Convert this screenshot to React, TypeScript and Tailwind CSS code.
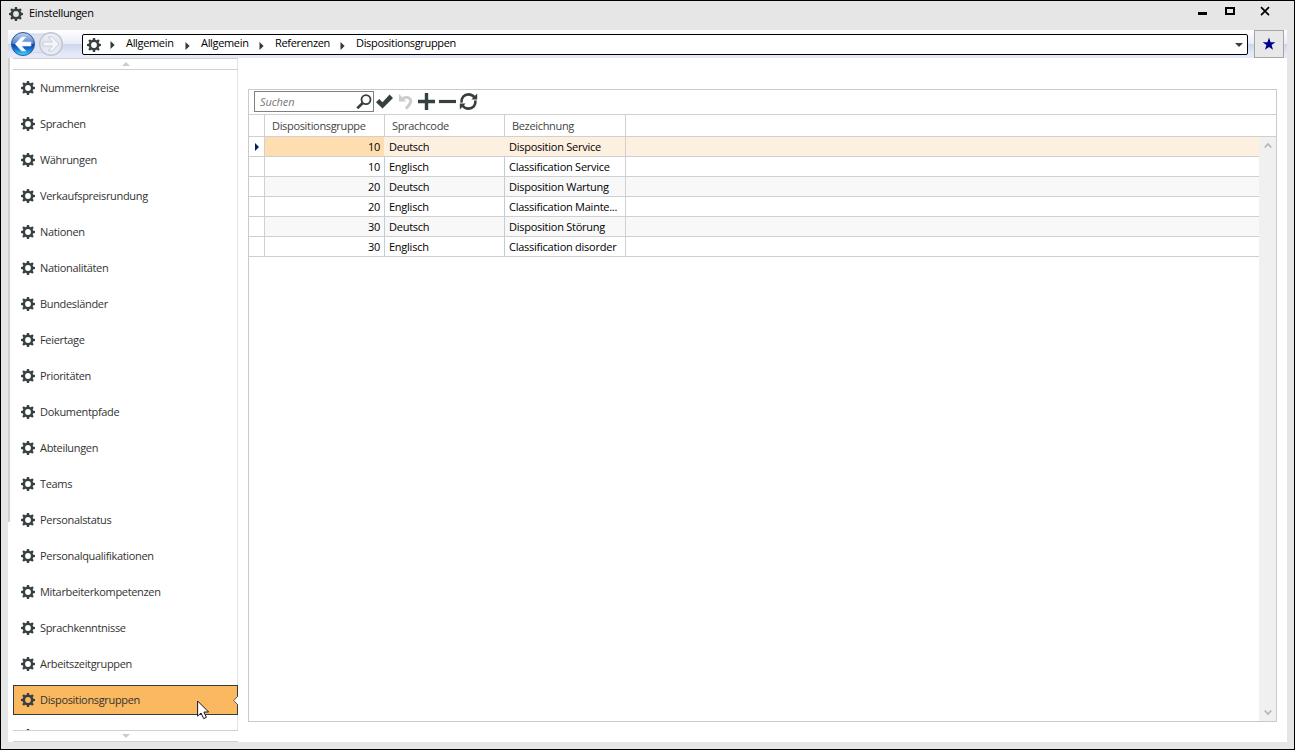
import clsx from "clsx";

const navItems = [
  "Nummernkreise",
  "Sprachen",
  "Währungen",
  "Verkaufspreisrundung",
  "Nationen",
  "Nationalitäten",
  "Bundesländer",
  "Feiertage",
  "Prioritäten",
  "Dokumentpfade",
  "Abteilungen",
  "Teams",
  "Personalstatus",
  "Personalqualifikationen",
  "Mitarbeiterkompetenzen",
  "Sprachkenntnisse",
  "Arbeitszeitgruppen",
  "Dispositionsgruppen",
  "",
];

const crumbs = [
  { label: "Allgemein", width: "w-[75px]" },
  { label: "Allgemein", width: "w-[74px]" },
  { label: "Referenzen", width: "w-[81px]" },
  { label: "Dispositionsgruppen", width: "w-[120px]" },
];

const rows = [
  { group: 10, language: "Deutsch", name: "Disposition Service" },
  { group: 10, language: "Englisch", name: "Classification Service" },
  { group: 20, language: "Deutsch", name: "Disposition Wartung" },
  { group: 20, language: "Englisch", name: "Classification Mainte..." },
  { group: 30, language: "Deutsch", name: "Disposition Störung" },
  { group: 30, language: "Englisch", name: "Classification disorder" },
];

const GearIcon = () => (
  <svg className="h-[14px] w-[14px] shrink-0" viewBox="-7 -7 14 14">
    <circle r="4.15" fill="none" stroke="#374040" strokeWidth="2.5" />
    {[0, 45, 90, 135, 180, 225, 270, 315].map((angle) => (
      <path
        key={angle}
        d="M-1.4 -4.6L-1.1 -7H1.1L1.4 -4.6Z"
        fill="#374040"
        transform={`rotate(${angle})`}
      />
    ))}
  </svg>
);

const TitleBar = () => (
  <header className="flex h-[29px] shrink-0 items-start bg-[#e6e6e6] pl-2">
    <div className="mt-[6px]">
      <GearIcon />
    </div>
    <span className="mt-[4px] ml-[6px] leading-4 text-black">Einstellungen</span>
    <svg className="mt-[4px] mr-[22px] ml-auto h-4 w-[76px]" viewBox="0 0 76 16" fill="none" stroke="#000">
      <path d="M2 8.5H11" strokeWidth="3" />
      <path d="M30 3H38V9H30Z" strokeWidth="2" />
      <path d="M65 2.2L73 10.2M73 2.2L65 10.2" strokeWidth="1.7" />
    </svg>
  </header>
);

const NavButtons = () => (
  <svg className="h-7 w-[60px] shrink-0" viewBox="0 0 60 28">
    <defs>
      <linearGradient id="back" x1="0" y1="0" x2="0" y2="1">
        <stop offset="0" stopColor="#c3d2ee" />
        <stop offset=".48" stopColor="#5583cc" />
        <stop offset=".5" stopColor="#0d3f9c" />
        <stop offset=".72" stopColor="#1272d4" />
        <stop offset="1" stopColor="#4de0ff" />
      </linearGradient>
      <linearGradient id="next" x1="0" y1="0" x2="0" y2="1">
        <stop offset="0" stopColor="#edf0f8" />
        <stop offset=".5" stopColor="#dfe3ed" />
        <stop offset="1" stopColor="#eceff9" />
      </linearGradient>
    </defs>
    <path d="M14 2.5Q29 6 44 2.5V25Q29 20 14 25Z" fill="#dbe2f3" stroke="#cdd6ea" />
    <circle cx="15" cy="14" r="11.5" fill="url(#back)" stroke="#2f5597" />
    <circle cx="43" cy="14" r="11.3" fill="url(#next)" stroke="#c2c6d0" strokeWidth="1.4" />
    <path
      d="M7.2 14L13.6 7H17.8L13.6 12H23V16H13.6L17.8 21H13.6Z"
      fill="#fff"
      stroke="#e6edf8"
      strokeWidth=".6"
    />
    <path
      d="M50.8 14L44.4 7H40.2L44.4 12H35V16H44.4L40.2 21H44.4Z"
      fill="#f5f6fb"
      stroke="#c3c8d3"
      strokeWidth=".8"
    />
  </svg>
);

const AddressBar = () => (
  <div className="flex h-7 shrink-0 bg-[linear-gradient(to_bottom,#fff_0%,#e9edf7_49%,#cbd5ec_50%,#e6e9fa_85%,#e6e9fa_100%)]">
    <NavButtons />
    <div className="mt-[4px] ml-[14px] flex h-[21px] w-[1166px] items-center rounded-[2px] border border-black bg-white pr-1 pl-[4px] text-black">
      <GearIcon />
      <div className="ml-[9px] flex h-4">
        {crumbs.map(({ label, width }, i) => (
          <div key={i} className={clsx("flex items-start whitespace-nowrap", width)}>
            <svg
              className={clsx("mr-[11px] h-[8px] w-[5px] shrink-0", i === 0 ? "mt-[4px]" : "mt-[5px]")}
              viewBox="0 0 5 8"
            >
              <path d="M.5 0L4.6 4L.5 8Z" fill="#2f3838" />
            </svg>
            <span className="-mt-[2px] leading-4">{label}</span>
          </div>
        ))}
      </div>
      <svg className="ml-auto h-[4px] w-[8px]" viewBox="0 0 8 4">
        <path d="M0 0H8L4 4Z" fill="#374040" />
      </svg>
    </div>
    <button className="ml-[6px] flex h-7 w-[30px] items-center justify-center border border-[#a5a5a5] bg-[#e8e8e8]">
      <svg className="h-[14px] w-[14px]" viewBox="0 0 14 14">
        <path d="M7 .5L8.6 5.2H13.4L9.6 8.1L11 12.8L7 10L3 12.8L4.4 8.1L.6 5.2H5.4Z" fill="#00008b" />
      </svg>
    </button>
  </div>
);

const Sidebar = () => (
  <aside className="flex w-[230px] shrink-0">
    <div className="h-[464px] w-[2px] bg-[#d0d0d0]" />
    <div className="relative ml-[3px] flex w-[225px] flex-col border-r border-[#e3e3e3]">
      <div className="flex h-[12px] w-[225px] shrink-0 items-center justify-center border-y border-[#d0d0d0]">
        <svg className="h-[4px] w-[8px]" viewBox="0 0 8 4">
          <path d="M0 4H8L4 0Z" fill="#ccc" />
        </svg>
      </div>
      <nav className="h-[660px] w-[225px] shrink-0 overflow-hidden pt-[3px]">
        {navItems.map((label, i) => (
          <div
            key={i}
            className={clsx(
              "relative mb-[6px] flex h-[30px] items-center gap-[5px] border pl-[7px] text-[#333]",
              i === 17 ? "border-[#333b3b] bg-[#fab861]" : "border-transparent"
            )}
          >
            <GearIcon />
            <span className="leading-4">{label}</span>
            {i === 17 && (
              <svg className="absolute top-[10px] -right-px h-[9px] w-[5px]" viewBox="0 0 5 9">
                <path d="M5 0L.7 4.5L5 9Z" fill="#fff" />
                <path d="M5 0L.7 4.5L5 9" fill="none" stroke="#5e5a50" />
              </svg>
            )}
          </div>
        ))}
      </nav>
      <div className="flex h-[12px] w-[225px] shrink-0 items-center justify-center border-y border-[#d0d0d0] bg-white">
        <svg className="h-[4px] w-[8px]" viewBox="0 0 8 4">
          <path d="M0 0H8L4 4Z" fill="#ccc" />
        </svg>
      </div>
      {/* mouse pointer */}
      <svg className="absolute top-[642px] left-[184px] h-[20px] w-[13px]" viewBox="0 0 13 20">
        <path
          d="M.6 1V16.2L4 13L6.7 18.6L9.4 17.3L6.9 12H11.6Z"
          fill="#fff"
          stroke="#151525"
        />
      </svg>
    </div>
  </aside>
);

const Toolbar = () => (
  <div className="flex h-6 shrink-0 pl-[5px]">
    <div className="mt-px flex h-[21px] w-[120px] justify-between border border-[#808080] pl-[5px]">
      <span className="mt-[2px] leading-4 tracking-[-0.1px] text-[#777] italic">Suchen</span>
      <svg className="mt-[2px] mr-px h-4 w-4" viewBox="0 0 16 16" fill="none" stroke="#374040">
        <circle cx="10" cy="5.6" r="4.5" strokeWidth="1.8" />
        <path d="M7 8.8L1.3 14.3" strokeWidth="2.6" />
      </svg>
    </div>
    <svg className="ml-[2px] h-6 w-[104px]" viewBox="0 0 104 24">
      <path d="M0 12.2L3.2 9L6.5 12.2L13.6 4.6L17 8L6.5 18.4Z" fill="#374040" />
      <path d="M27 8.2C32.5 5.8 36 9.4 34.2 13.2C33.4 15 32 16.6 29.8 18.6" fill="none" stroke="#ccc" strokeWidth="2.9" />
      <path d="M23 4V11.6H30.4Z" fill="#ccc" />
      <path d="M50.5 3V20M42 11.5H59" stroke="#374040" strokeWidth="3.4" />
      <path d="M63 11.5H80" stroke="#374040" strokeWidth="3.2" />
      <path d="M85.6 12.6C85 7.6 88.2 4.4 92.5 4.4C95.2 4.4 97.2 5.6 98.6 7.5" fill="none" stroke="#374040" strokeWidth="2.6" />
      <path d="M99.4 10.4C100 15.4 96.8 18.6 92.5 18.6C89.8 18.6 87.8 17.4 86.4 15.5" fill="none" stroke="#374040" strokeWidth="2.6" />
      <path d="M101.2 3.6V9.4H95.4ZM83.8 19.4V13.6H89.6Z" fill="#374040" />
    </svg>
  </div>
);

const DataGrid = () => (
  <div className="flex min-h-0 flex-1 flex-col">
    <div className="flex h-[23px] shrink-0 border-y border-[#d0d0d0] leading-[22px] text-[#444]">
      <div className="w-4 border-r border-[#d0d0d0]" />
      <div className="w-[120px] border-r border-[#d0d0d0] pl-[7px]">Dispositionsgruppe</div>
      <div className="w-[120px] border-r border-[#d0d0d0] pl-[7px]">Sprachcode</div>
      <div className="w-[121px] border-r border-[#d0d0d0] pl-[7px]">Bezeichnung</div>
    </div>
    <div className="flex flex-1">
      <div className="flex-1 tracking-[-0.25px] text-black">
        {rows.map((row, i) => (
          <div
            key={i}
            className={clsx(
              "flex h-5 border-b border-[#d0d0d0] leading-5",
              i === 0 ? "bg-[#fef0e0]" : i % 2 === 0 ? "bg-[#f8f8f8]" : "bg-white"
            )}
          >
            <div className="flex w-4 items-center justify-center border-r border-[#d0d0d0] bg-white">
              {i === 0 && (
                <svg className="h-[8px] w-[4px]" viewBox="0 0 4 8">
                  <path d="M0 0L4 4L0 8Z" fill="#002060" />
                </svg>
              )}
            </div>
            <div
              className={clsx(
                "w-[120px] border-r pr-[4px] text-right",
                i === 0 ? "border-[#fef0e0] bg-[#fedeb0]" : "border-[#c0cddb]"
              )}
            >
              {row.group}
            </div>
            <div
              className={clsx(
                "w-[120px] border-r pl-[4px]",
                i === 0 ? "border-[#fef0e0]" : "border-[#c0cddb]"
              )}
            >
              {row.language}
            </div>
            <div className="w-[121px] border-r border-[#d0d0d0] pl-[4px] whitespace-nowrap">
              {row.name}
            </div>
          </div>
        ))}
      </div>
      <div className="flex w-[17px] flex-col items-center justify-between bg-[#f0f0f0] py-[5px]">
        <svg className="h-[7px] w-[8px]" viewBox="0 0 8 7" fill="none" stroke="#b5b5b5" strokeWidth="1.7">
          <path d="M.7 5.5L4 2L7.3 5.5" />
        </svg>
        <svg className="h-[7px] w-[8px]" viewBox="0 0 8 7" fill="none" stroke="#b5b5b5" strokeWidth="1.7">
          <path d="M.7 1.5L4 5L7.3 1.5" />
        </svg>
      </div>
    </div>
  </div>
);

export default function App() {
  return (
    <div className="flex h-[750px] w-[1295px] flex-col overflow-hidden border border-black bg-[#e6e6e6] font-['Open_Sans','Noto_Sans',sans-serif] text-[11px] tracking-[-0.33px]">
      <TitleBar />
      <div className="mx-[7px] mb-[7px] flex min-h-0 flex-1 flex-col bg-white">
        <AddressBar />
        <div className="flex min-h-0 flex-1">
          <Sidebar />
          <main className="mt-[31px] mr-[10px] mb-[20px] ml-[10px] flex flex-1 flex-col border border-[#cacaca]">
            <Toolbar />
            <DataGrid />
          </main>
        </div>
      </div>
    </div>
  );
}
